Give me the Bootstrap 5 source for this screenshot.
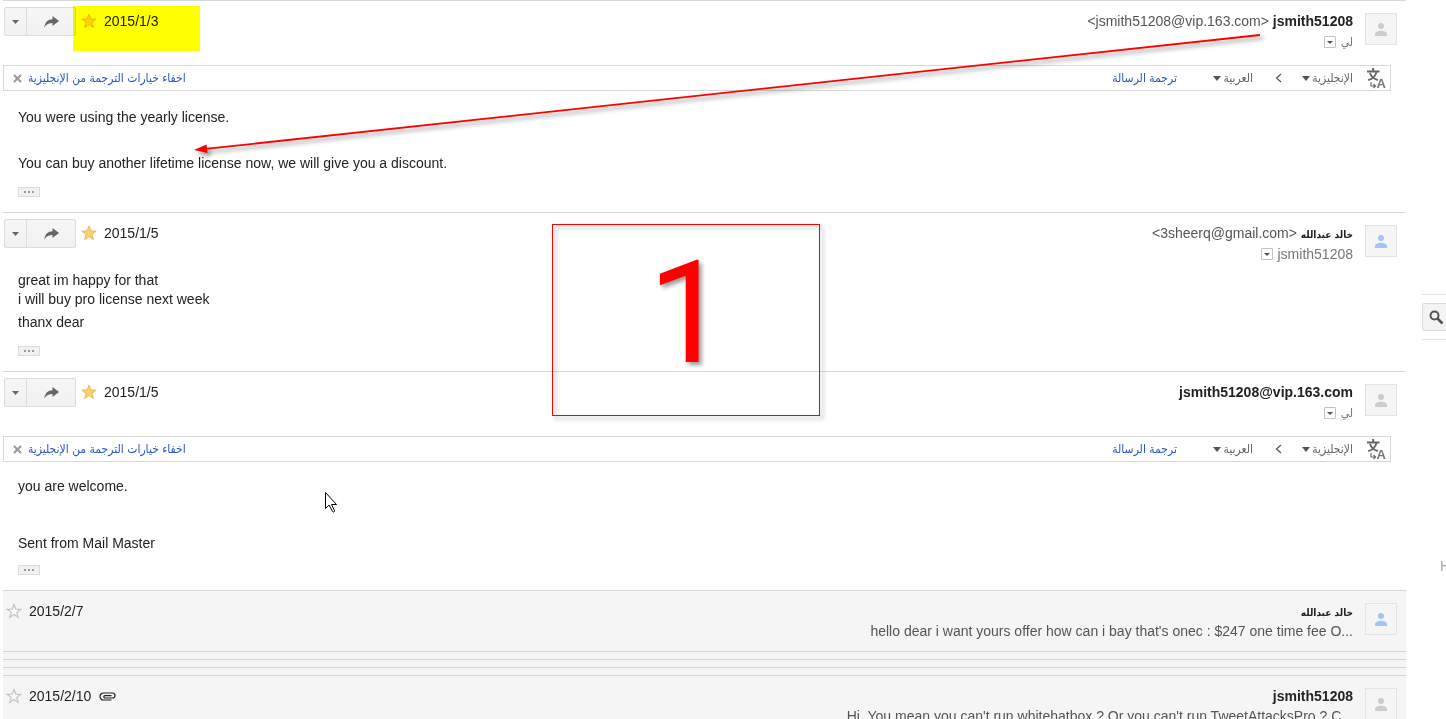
<!DOCTYPE html>
<html lang="ar">
<head>
<meta charset="utf-8">
<meta name="viewport" content="width=device-width, initial-scale=1">
<title>Mail conversation</title>
<link href="https://cdn.jsdelivr.net/npm/bootstrap@5.3.0/dist/css/bootstrap.min.css" rel="stylesheet">
<style>
body{font-family:"Liberation Sans","DejaVu Sans",sans-serif;font-size:14px;line-height:20px;color:#222;background:#fff}
button{font:inherit;padding:0}
svg{display:block;flex:none}
.thread{margin-left:3px;margin-right:16px;min-width:0}
.msg{border-top:1px solid #d8d8d8}
.msg-head{min-height:58px;padding-right:9px}
.tools{padding:6px 0 0 1px}
.tool-group{height:29px;border:1px solid #dcdcdc;border-radius:2px;background:linear-gradient(#f6f6f6,#f1f1f1);margin-right:5px}
.tool-group button{border:0;background:none;display:flex;align-items:center;justify-content:center;color:#666}
.tool-more{width:21px}
.tool-group .tool-fwd{width:49px;border-left:1px solid #dcdcdc}
.star{border:0;background:none}
.when{margin-left:7px}
.who{padding-top:10px;color:#555}
.who b{color:#222}
.to{color:#777;height:22px;gap:5px}
.drop{width:12px;height:12px;border:1px solid #c4c4c4;border-radius:1px;background:#fff;color:#555}
.avatar{width:32px;height:32px;margin:12px 0 0 12px;border:1px solid #e3e3e3;background:#f5f5f5;color:#ccc}
.known{color:#a5c3f7}
.ar-name{font-family:"DejaVu Sans Condensed","DejaVu Sans",sans-serif;font-size:10px;line-height:16px}
.ar-to,.ar{font-family:"DejaVu Sans Condensed","DejaVu Sans",sans-serif;font-size:12px;line-height:16px}
.tbar{margin:6px 15px 0 0;height:26px;border:1px solid #d8d8d8;padding:0 3px 0 9px;color:#555}
.tbar a{color:#2a56c6;text-decoration:none}
.tbar select{appearance:none;border:0;background:none;padding:0;color:#666;direction:rtl}
.close-x{border:0;background:none;color:#999;margin-right:6px}
.lang{gap:2px}
.lang-from{margin:0 14px 0 20px}
.lang-to{margin:0 22px 0 36px}
.msg-body{padding:15px}
.msg-body p{margin:0}
.msg-body.plain{padding-top:0}
.wide{line-height:23px}
.close-set{line-height:19px}
.close-set + .wide{padding-top:2px}
.dots{width:22px;height:10px;border:1px solid #dcdcdc;background:#f1f1f1;color:#999;margin-top:12px}
.folded{background:#f5f5f5}
.folded .msg-head{min-height:60px}
.fold-date{padding:10px 0 0 3px}
.gap-line{height:8px}
.rail{width:24px;padding-top:294px;flex:none}
.rail-box{border:solid #e2e2e2;border-width:1px 0;padding:8px 0}
.rail-box button{display:block;width:40px;height:28px;border:1px solid #dcdcdc;border-radius:2px;background:#f3f3f3;padding-left:6px;color:#555}
.rail-note{margin:216px 0 0 18px;color:#aaa}
.note{pointer-events:none}
.marker{left:73px;top:6px;width:127px;height:45px;background:#ff0;mix-blend-mode:multiply}
.frame{left:552px;top:224px;width:268px;height:192px;border:1px solid red;filter:drop-shadow(3px 3px 2px rgba(0,0,0,.4));font-family:Roboto,sans-serif;font-size:142px;line-height:142px;color:red;padding:0 0 12px 4px}
</style>
</head>
<body>
<svg width="0" height="0" class="position-absolute" aria-hidden="true">
  <symbol id="caret" viewBox="0 0 8 5" preserveAspectRatio="none"><path d="M0 0h8L4 5z" fill="currentColor"/></symbol>
  <symbol id="fwd" viewBox="0 0 15 12"><path d="M.3 11.500C1 6 4 3.300 8.500 3.200V0L15 5l-6.500 5V7C5 7 2.500 8 .3 11.500z" fill="currentColor"/></symbol>
  <symbol id="star" viewBox="0 0 16 16"><path d="M8 1l1.900 4.900 5.300.2-4.200 3.300 1.500 5.200L8 11.600l-4.500 3L5 9.400.8 6.100l5.300-.2z" fill="#fdd268" stroke="#dfb04e" stroke-width=".8"/></symbol>
  <symbol id="star-o" viewBox="0 0 16 16"><path d="M8 1.500l1.800 4.600 5 .2-4 3.100 1.400 4.900L8 11.500l-4.200 2.800 1.400-4.900-4-3.100 5-.2z" fill="#fafafa" stroke="#c4c4c4" stroke-width="1.200"/></symbol>
  <symbol id="person" viewBox="0 0 12 13"><circle cx="6" cy="3" r="3" fill="currentColor"/><path d="M0 13v-2c0-2 3-3.300 6-3.300s6 1.300 6 3.300v2z" fill="currentColor"/></symbol>
  <symbol id="ellipsis" viewBox="0 0 10 2"><path d="M0 0h2v2H0zM4 0h2v2H4zM8 0h2v2H8z" fill="currentColor"/></symbol>
  <symbol id="cross" viewBox="0 0 9 9"><path d="M1 1l7 7M8 1L1 8" stroke="currentColor" stroke-width="2"/></symbol>
  <symbol id="chev" viewBox="0 0 7 10"><path d="M6 1L1.500 5 6 9" fill="none" stroke="currentColor" stroke-width="1.200"/></symbol>
  <symbol id="translate" viewBox="0 0 20 21"><g fill="none" stroke="#666"><path d="M0 3.500h12.500M6.200 0v3.500" stroke-width="2"/><path d="M9.500 4C8.500 8 5.500 11 1.200 12.200M3 5c1 3.200 4 6 8 7.200" stroke-width="1.800"/><path d="M4 14v4h4M6.500 16l2 2-2 2" stroke-width="1.200"/></g><text x="9.500" y="20" font-size="13" font-weight="700" style="font-family:'Liberation Sans',sans-serif" fill="#777">A</text></symbol>
</svg>

<div class="d-flex vh-100 overflow-hidden position-relative">
  <main class="thread flex-grow-1">
    <article class="msg">
      <header class="msg-head d-flex">
        <div class="tools d-flex align-items-start flex-grow-1">
          <div class="tool-group d-flex"><button class="tool-more" aria-label="More"><svg width="7" height="4"><use href="#caret"/></svg></button><button class="tool-fwd" aria-label="Forward"><svg width="15" height="12"><use href="#fwd"/></svg></button></div>
          <div class="d-flex align-items-center pt-1"><button class="star" aria-label="Starred"><svg width="16" height="16"><use href="#star"/></svg></button><time class="when">2015/1/3</time></div>
        </div>
        <div class="who text-end"><div>&lt;jsmith51208@vip.163.com&gt; <b>jsmith51208</b></div><div class="to d-flex justify-content-end align-items-center"><button class="drop d-flex align-items-center justify-content-center" aria-label="Details"><svg width="6" height="3"><use href="#caret"/></svg></button><span class="ar-to" dir="rtl">لي</span></div></div>
        <div class="avatar d-flex align-items-center justify-content-center"><svg width="12" height="13"><use href="#person"/></svg></div>
      </header>
      <div class="tbar d-flex align-items-center ar">
        <button class="close-x" aria-label="Close"><svg width="9" height="9"><use href="#cross"/></svg></button>
        <a href="#" dir="rtl" class="me-auto">اخفاء خيارات الترجمة من الإنجليزية</a>
        <a href="#" dir="rtl">ترجمة الرسالة</a>
        <div class="lang lang-to d-flex align-items-center"><svg width="8" height="5"><use href="#caret"/></svg><select aria-label="To language"><option>العربية</option></select></div>
        <svg width="7" height="10"><use href="#chev"/></svg>
        <div class="lang lang-from d-flex align-items-center"><svg width="8" height="5"><use href="#caret"/></svg><select aria-label="From language"><option>الإنجليزية</option></select></div>
        <svg width="20" height="21"><use href="#translate"/></svg>
      </div>
      <div class="msg-body"><p class="wide">You were using the yearly license.<br><br>You can buy another lifetime license now, we will give you a discount.</p>
        <button class="dots d-flex align-items-center justify-content-center" aria-label="Show trimmed content"><svg width="10" height="2"><use href="#ellipsis"/></svg></button></div>
    </article>

    <article class="msg">
      <header class="msg-head d-flex">
        <div class="tools d-flex align-items-start flex-grow-1">
          <div class="tool-group d-flex"><button class="tool-more" aria-label="More"><svg width="7" height="4"><use href="#caret"/></svg></button><button class="tool-fwd" aria-label="Forward"><svg width="15" height="12"><use href="#fwd"/></svg></button></div>
          <div class="d-flex align-items-center pt-1"><button class="star" aria-label="Starred"><svg width="16" height="16"><use href="#star"/></svg></button><time class="when">2015/1/5</time></div>
        </div>
        <div class="who text-end"><div>&lt;3sheerq@gmail.com&gt; <b class="ar-name" dir="rtl">خالد عبدالله</b></div><div class="to d-flex justify-content-end align-items-center"><button class="drop d-flex align-items-center justify-content-center" aria-label="Details"><svg width="6" height="3"><use href="#caret"/></svg></button><span>jsmith51208</span></div></div>
        <div class="avatar known d-flex align-items-center justify-content-center"><svg width="12" height="13"><use href="#person"/></svg></div>
      </header>
      <div class="msg-body plain"><p class="close-set">great im happy for that<br>i will buy pro license next week</p><p class="wide">thanx dear</p>
        <button class="dots d-flex align-items-center justify-content-center" aria-label="Show trimmed content"><svg width="10" height="2"><use href="#ellipsis"/></svg></button></div>
    </article>

    <article class="msg">
      <header class="msg-head d-flex">
        <div class="tools d-flex align-items-start flex-grow-1">
          <div class="tool-group d-flex"><button class="tool-more" aria-label="More"><svg width="7" height="4"><use href="#caret"/></svg></button><button class="tool-fwd" aria-label="Forward"><svg width="15" height="12"><use href="#fwd"/></svg></button></div>
          <div class="d-flex align-items-center pt-1"><button class="star" aria-label="Starred"><svg width="16" height="16"><use href="#star"/></svg></button><time class="when">2015/1/5</time></div>
        </div>
        <div class="who text-end"><div><b>jsmith51208@vip.163.com</b></div><div class="to d-flex justify-content-end align-items-center"><button class="drop d-flex align-items-center justify-content-center" aria-label="Details"><svg width="6" height="3"><use href="#caret"/></svg></button><span class="ar-to" dir="rtl">لي</span></div></div>
        <div class="avatar d-flex align-items-center justify-content-center"><svg width="12" height="13"><use href="#person"/></svg></div>
      </header>
      <div class="tbar d-flex align-items-center ar">
        <button class="close-x" aria-label="Close"><svg width="9" height="9"><use href="#cross"/></svg></button>
        <a href="#" dir="rtl" class="me-auto">اخفاء خيارات الترجمة من الإنجليزية</a>
        <a href="#" dir="rtl">ترجمة الرسالة</a>
        <div class="lang lang-to d-flex align-items-center"><svg width="8" height="5"><use href="#caret"/></svg><select aria-label="To language"><option>العربية</option></select></div>
        <svg width="7" height="10"><use href="#chev"/></svg>
        <div class="lang lang-from d-flex align-items-center"><svg width="8" height="5"><use href="#caret"/></svg><select aria-label="From language"><option>الإنجليزية</option></select></div>
        <svg width="20" height="21"><use href="#translate"/></svg>
      </div>
      <div class="msg-body"><p class="close-set">you are welcome.<br><br><br>Sent from Mail Master</p>
        <button class="dots d-flex align-items-center justify-content-center" aria-label="Show trimmed content"><svg width="10" height="2"><use href="#ellipsis"/></svg></button></div>
    </article>

    <article class="msg folded">
      <header class="msg-head d-flex">
        <div class="fold-date d-flex align-items-start flex-grow-1"><div class="d-flex align-items-center"><button class="star" aria-label="Not starred"><svg width="16" height="16"><use href="#star-o"/></svg></button><time class="when">2015/2/7</time></div></div>
        <div class="who text-end"><div><b class="ar-name" dir="rtl">خالد عبدالله</b></div><div>hello dear i want yours offer how can i bay that's onec : $247 one time fee O...</div></div>
        <div class="avatar known d-flex align-items-center justify-content-center"><svg width="12" height="13"><use href="#person"/></svg></div>
      </header>
    </article>
    <div class="msg folded gap-line"></div>
    <div class="msg folded gap-line"></div>
    <div class="msg folded gap-line"></div>
    <article class="msg folded">
      <header class="msg-head d-flex">
        <div class="fold-date d-flex align-items-start flex-grow-1"><div class="d-flex align-items-center"><button class="star" aria-label="Not starred"><svg width="16" height="16"><use href="#star-o"/></svg></button><time class="when me-2">2015/2/10</time><svg width="17" height="9" viewBox="0 0 17 9" fill="none" stroke="#222" stroke-width="1.200"><path d="M12.500 8H4.500a3.500 3.500 0 010-7h9a2.500 2.500 0 010 5H6a1.200 1.200 0 010-2.400h6.500"/></svg></div></div>
        <div class="who text-end"><div><b>jsmith51208</b></div><div>Hi, You mean you can't run whitehatbox ? Or you can't run TweetAttacksPro ? C...</div></div>
        <div class="avatar d-flex align-items-center justify-content-center"><svg width="12" height="13"><use href="#person"/></svg></div>
      </header>
    </article>
  </main>

  <aside class="rail overflow-hidden">
    <div class="rail-box"><button aria-label="Search"><svg width="15" height="15" viewBox="0 0 15 15" fill="none" stroke="currentColor"><circle cx="5.500" cy="5.500" r="4" stroke-width="2"/><path d="M8.500 8.500l5 5" stroke-width="2.500"/></svg></button></div>
    <div class="rail-note">H</div>
  </aside>

  <div class="note marker position-absolute"></div>
  <div class="note frame position-absolute d-flex align-items-center justify-content-center">1</div>
  <svg class="note position-absolute top-0 start-0" width="1446" height="719" aria-hidden="true">
    <g style="filter:drop-shadow(3px 3px 2px rgba(0,0,0,.45))"><path d="M1260 35L203 149.200" stroke="red" stroke-width="1.800"/><path d="M194 150l12.500-5.500 1 8.500z" fill="red"/></g>
    <path d="M325.500 492.500v16l3.500-3.500 3.500 6.500c.5 1 2.500.5 2-1l-3-6h5z" fill="#fff" stroke="#000"/>
  </svg>
</div>
<script src="https://cdn.jsdelivr.net/npm/bootstrap@5.3.0/dist/js/bootstrap.bundle.min.js"></script>
</body>
</html>
